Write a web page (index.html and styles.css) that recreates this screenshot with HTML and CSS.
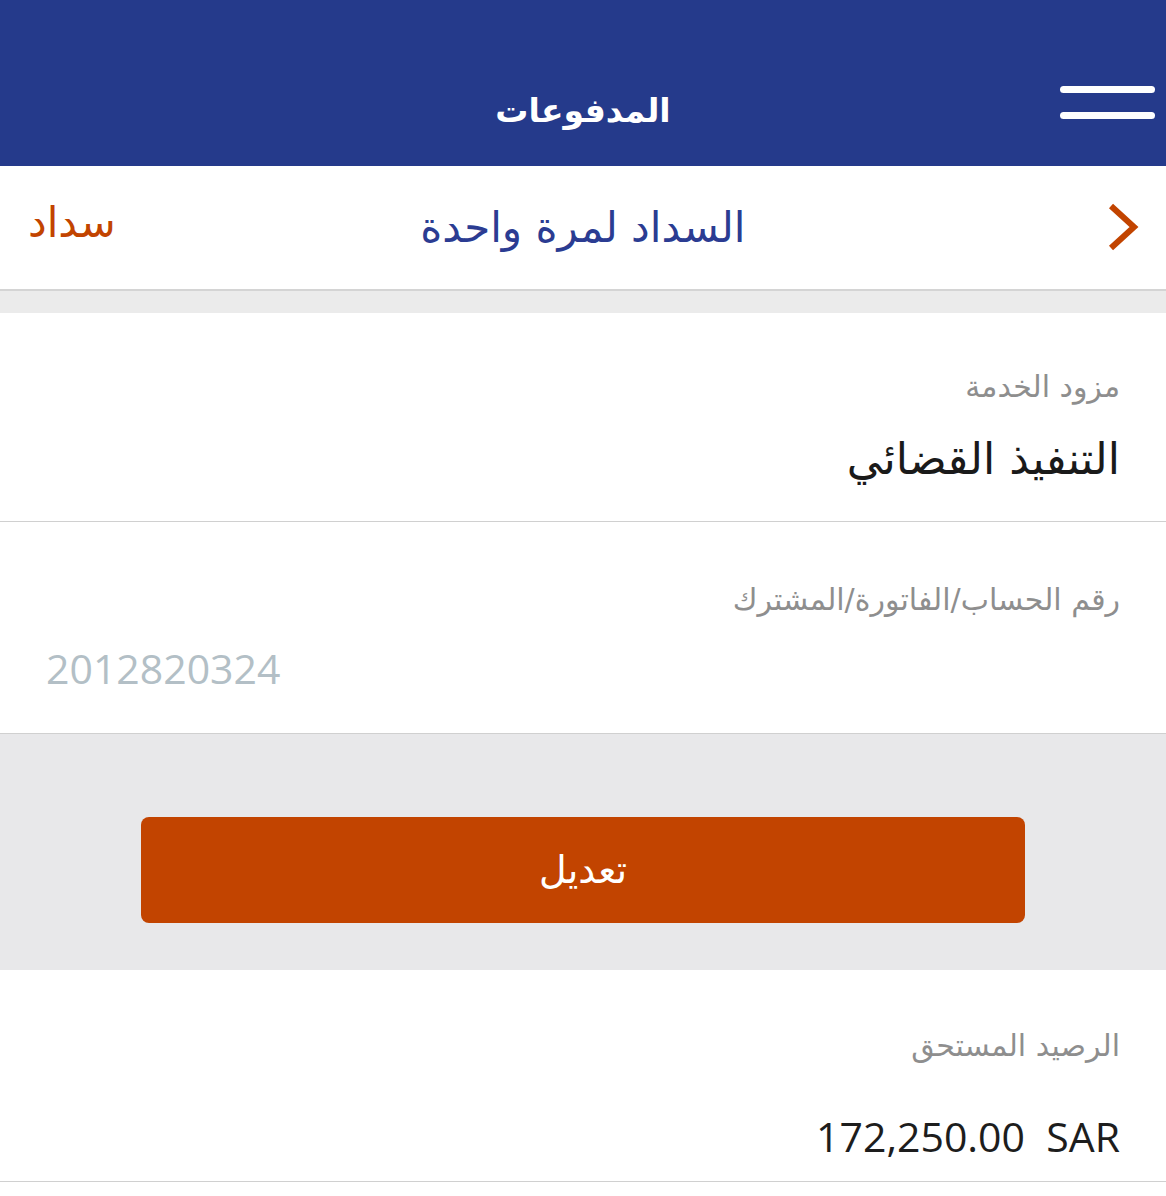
FILE: index.html
```html
<!DOCTYPE html>
<html lang="ar" dir="rtl">

<head>
    <meta charset="UTF-8">
    <meta name="viewport" content="width=device-width, initial-scale=1.0">
    <title>المدفوعات</title>
    <link rel="stylesheet" href="styles.css">
</head>

<body>
    <header class="header">
        <button class="menu-btn" aria-label="menu">
            <span></span>
            <span></span>
        </button>
        <h1 class="header-title">المدفوعات</h1>
    </header>

    <nav class="subbar">
        <a class="back" href="#">
            <svg width="34" height="50" viewBox="0 0 34 50">
                <path d="M5 4 L28 25 L5 46" fill="none" stroke="#c24400" stroke-width="6" />
            </svg>
        </a>
        <h2 class="subbar-title">السداد لمرة واحدة</h2>
        <span class="subbar-tag">سداد</span>
    </nav>

    <div class="gap-strip"></div>

    <section class="field">
        <div class="field-label">مزود الخدمة</div>
        <div class="field-value">التنفيذ القضائي</div>
    </section>

    <section class="field field-account">
        <div class="field-label">رقم الحساب/الفاتورة/المشترك</div>
        <div class="field-value account-number" dir="ltr">2012820324</div>
    </section>

    <div class="action-area">
        <button class="edit-btn">تعديل</button>
    </div>

    <section class="field field-balance">
        <div class="field-label">الرصيد المستحق</div>
        <div class="field-value amount" dir="ltr">172,250.00&nbsp;&nbsp;SAR</div>
    </section>
</body>

</html>
```

FILE: styles.css
```css
body {
    margin: 0;
    background-color: #fff;
    font-family: "DejaVu Sans", sans-serif;
}

.header {
    height: 166px;
    background-color: #253a8b;
    position: relative;
    display: flex;
    align-items: center;
    justify-content: center;
}

.header-title {
    margin: 54px 0 0 0;
    color: #fff;
    font-size: 33px;
    font-weight: bold;
}

.menu-btn {
    position: absolute;
    right: 11px;
    top: 86px;
    width: 95px;
    padding: 0;
    border: none;
    background: none;
    display: flex;
    flex-direction: column;
    gap: 19px;
}

.menu-btn span {
    display: block;
    height: 7px;
    border-radius: 4px;
    background-color: #fff;
}

.subbar {
    height: 123px;
    display: flex;
    align-items: center;
    padding: 0 26px 0 28px;
    border-bottom: 2px solid #d4d4d4;
}

.back {
    display: flex;
    width: 34px;
    margin-top: -2px;
}

.subbar-title {
    flex: 1;
    margin: 0;
    text-align: center;
    color: #2b3c92;
    font-size: 42px;
    font-weight: normal;
    padding-right: 56px;
}

.subbar-tag {
    color: #c24400;
    font-size: 42px;
    margin-top: -10px;
}

.gap-strip {
    height: 22px;
    background-color: #ebebeb;
}

.field {
    height: 209px;
    padding: 0 46px;
    box-sizing: border-box;
    border-bottom: 1px solid #d0d0d0;
    display: flex;
    flex-direction: column;
}

.field-label {
    margin-top: 54px;
    color: #8e8e8e;
    font-size: 30px;
    line-height: 40px;
}

.field-value {
    margin-top: 26px;
    color: #1a1a1a;
    font-size: 44px;
    line-height: 52px;
}

.field-account {
    height: 212px;
}

.field-account .field-label {
    margin-top: 58px;
}

.account-number {
    text-align: left;
    color: #b3bfc6;
    font-family: "Open Sans", sans-serif;
    font-size: 41px;
    margin-top: 22px;
}

.action-area {
    height: 236px;
    background-color: #e8e8ea;
    display: flex;
    align-items: center;
    justify-content: center;
}

.edit-btn {
    width: 884px;
    height: 106px;
    border: none;
    border-radius: 8px;
    background-color: #c24400;
    color: #fff;
    font-family: "DejaVu Sans", sans-serif;
    font-size: 38px;
    margin-top: 36px;
}

.field-balance {
    height: 212px;
}

.field-balance .field-label {
    margin-top: 56px;
}

.amount {
    text-align: right;
    font-family: "Open Sans", sans-serif;
    font-size: 41px;
    margin-top: 44px;
    color: #1d1d1d;
}
```
